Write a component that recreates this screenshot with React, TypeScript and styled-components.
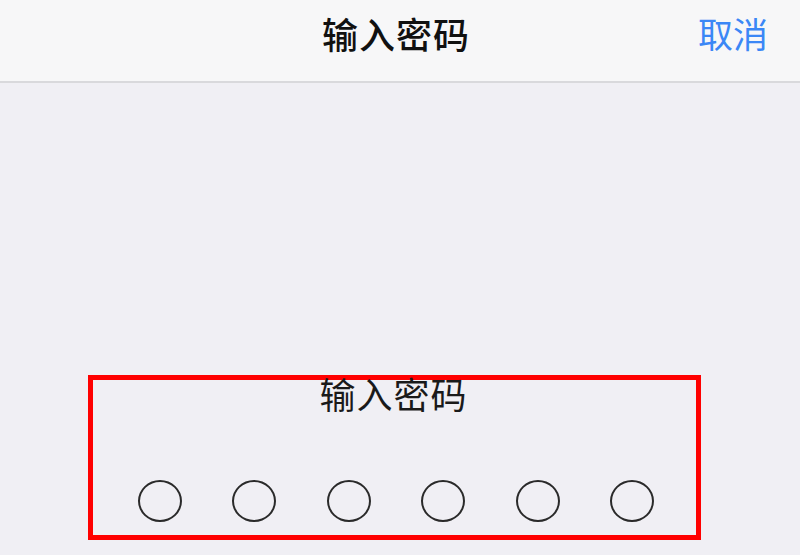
import React from "react"
import styled, { createGlobalStyle } from "styled-components"

const GlobalStyle = createGlobalStyle`
    html, body {
        margin: 0;
        padding: 0;
        background: #f0eff4;
    }
    body {
        font-family: "Noto Sans CJK SC", "Noto Sans", sans-serif;
    }
`

const Page = styled.div`
    width: 800px;
    height: 555px;
    overflow: hidden;
    background: #f0eff4;
    display: flex;
    flex-direction: column;
`

const NavBar = styled.header`
    height: 83px;
    flex-shrink: 0;
    box-sizing: border-box;
    background: #f7f7f8;
    border-bottom: 2px solid #d9d9dc;
    display: grid;
    grid-template-columns: 1fr auto 1fr;
    align-items: start;
    padding-top: 9px;
`

const NavTitle = styled.h1`
    grid-column: 2;
    margin: 0 0 0 -8px;
    font-size: 36px;
    line-height: 48px;
    font-weight: 500;
    color: #111;
    letter-spacing: 1px;
`

const CancelButton = styled.button`
    grid-column: 3;
    justify-self: end;
    margin-right: 32px;
    padding: 0;
    border: none;
    background: none;
    font-family: inherit;
    font-size: 35px;
    line-height: 48px;
    color: #3b87f6;
    cursor: pointer;
`

const Body = styled.main`
    flex: 1;
    display: flex;
    flex-direction: column;
    padding: 292px 0 0 88px;
`

const Highlight = styled.section`
    width: 613px;
    height: 165px;
    box-sizing: border-box;
    border: 5px solid #ff0000;
    display: flex;
    flex-direction: column;
    align-items: center;
`

const PromptText = styled.div`
    margin: -10px 0 0 -2px;
    font-size: 36px;
    line-height: 46px;
    color: #1a1a1a;
    letter-spacing: 1px;
`

const DotRow = styled.div`
    margin-top: 64px;
    display: flex;
    gap: 50.5px;
    margin-left: 3px;
`

const Dot = styled.span`
    width: 44px;
    height: 42px;
    box-sizing: border-box;
    border: 2px solid #2a2a2a;
    border-radius: 50%;
`

export default function App() {
    return (
        <Page>
            <GlobalStyle />
            <NavBar>
                <NavTitle>输入密码</NavTitle>
                <CancelButton>取消</CancelButton>
            </NavBar>
            <Body>
                <Highlight>
                    <PromptText>输入密码</PromptText>
                    <DotRow>
                        {Array.from({ length: 6 }).map((_, i) => (
                            <Dot key={i} />
                        ))}
                    </DotRow>
                </Highlight>
            </Body>
        </Page>
    )
}
